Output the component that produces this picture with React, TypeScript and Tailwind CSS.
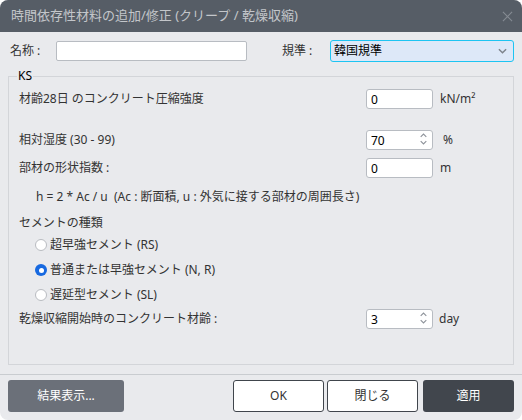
import React, { useState } from 'react';

// Small chevron used by the select box and the spin buttons
const Chevron: React.FC<{ dir: 'up' | 'down'; className?: string }> = ({ dir, className }) => (
  <svg viewBox="0 0 10 6" className={className} fill="none" stroke="currentColor" strokeWidth={1.6}>
    {dir === 'down' ? <path d="M1 1l4 4 4-4" /> : <path d="M1 5l4-4 4 4" />}
  </svg>
);

interface NumberFieldProps {
  value: string;
  spin?: boolean;
  onChange: (v: string) => void;
}

const NumberField: React.FC<NumberFieldProps> = ({ value, spin, onChange }) => (
  <div className="relative w-[67px] h-[20px] bg-white border border-[#b8bcc2] rounded-[3px] flex items-center">
    <input
      value={value}
      onChange={(e) => onChange(e.target.value)}
      className="w-full h-full pl-[4px] pr-[16px] bg-transparent outline-none text-[12px] text-black"
    />
    {spin && (
      <div className="absolute right-[5px] top-[2px] flex flex-col gap-[2px] text-[#8e939a]">
        <Chevron dir="up" className="w-[7px] h-[5px]" />
        <Chevron dir="down" className="w-[7px] h-[5px]" />
      </div>
    )}
  </div>
);

const Radio: React.FC<{ checked: boolean; label: string; onClick: () => void }> = ({ checked, label, onClick }) => (
  <button type="button" onClick={onClick} className="flex items-center gap-[3px] h-[16px] text-[12px] text-[#333]">
    {checked ? (
      <span className="w-[12px] h-[12px] rounded-full bg-[#1769e0] flex items-center justify-center">
        <span className="w-[5px] h-[5px] rounded-full bg-white" />
      </span>
    ) : (
      <span className="w-[12px] h-[12px] rounded-full bg-white border border-[#b9bcc1]" />
    )}
    <span>{label}</span>
  </button>
);

const cementTypes = ['超早強セメント (RS)', '普通または早強セメント (N, R)', '遅延型セメント (SL)'];

const App: React.FC = () => {
  const [name, setName] = useState('');
  const [fck, setFck] = useState('0');
  const [humidity, setHumidity] = useState('70');
  const [shape, setShape] = useState('0');
  const [age, setAge] = useState('3');
  const [cement, setCement] = useState(1);

  return (
    <div
      className="w-[522px] h-[420px] bg-[#e9eaed] rounded-[8px] overflow-hidden flex flex-col text-[12px] text-[#333]"
      style={{ fontFamily: '"Noto Sans", "Noto Sans CJK JP", sans-serif' }}
    >
      {/* Title bar */}
      <div className="h-[32px] shrink-0 bg-[#565d66] flex items-center justify-between pl-[11px] pr-[9px]">
        <span className="text-[13px] text-[#c3c6ca]">時間依存性材料の追加/修正 (クリープ / 乾燥収縮)</span>
        <svg viewBox="0 0 12 12" className="w-[11px] h-[11px] text-[#858b93]" stroke="currentColor" strokeWidth={1.2}>
          <path d="M1 1l10 10M11 1L1 11" />
        </svg>
      </div>

      {/* Name / standard */}
      <div className="flex items-center h-[22px] mt-[8px] pl-[10px]">
        <span className="w-[46px]">名称 :</span>
        <input
          value={name}
          onChange={(e) => setName(e.target.value)}
          className="w-[191px] h-[20px] bg-white border border-[#b8bcc2] rounded-[2px] outline-none px-[4px]"
        />
        <span className="ml-[35px] w-[48px]">規準 :</span>
        <div className="w-[184px] h-[22px] bg-[#dde8f8] border border-[#1dc4f2] rounded-[3px] flex items-center justify-between pl-[3px] pr-[6px] text-black">
          <span>韓国規準</span>
          <Chevron dir="down" className="w-[9px] h-[6px] text-[#7d838b]" />
        </div>
      </div>

      {/* KS parameters */}
      <fieldset className="mx-[8px] mt-[7px] h-[296px] border border-[#d3d5d9] pl-[10px] pr-[10px]">
        <legend className="ml-[-2px] px-[1px] text-[12px] text-black leading-[14px]">KS</legend>

        <div className="flex items-center h-[20px] mt-[6px]">
          <span className="w-[347px]">材齢28日 のコンクリート圧縮強度</span>
          <NumberField value={fck} onChange={setFck} />
          <span className="ml-[7px]">kN/m²</span>
        </div>

        <div className="flex items-center h-[20px] mt-[21px]">
          <span className="w-[347px]">相対湿度 (30 - 99)</span>
          <NumberField value={humidity} spin onChange={setHumidity} />
          <span className="ml-[10px]">%</span>
        </div>

        <div className="flex items-center h-[20px] mt-[8px]">
          <span className="w-[347px]">部材の形状指数 :</span>
          <NumberField value={shape} onChange={setShape} />
          <span className="ml-[7px]">m</span>
        </div>

        <div className="pl-[17px] mt-[9px] h-[20px] leading-[20px]">
          h = 2 * Ac / u&nbsp;&nbsp;(Ac : 断面積, u : 外気に接する部材の周囲長さ)
        </div>

        <div className="mt-[8px] h-[16px] leading-[16px]">セメントの種類</div>
        <div className="pl-[16px] mt-[6px] flex flex-col gap-[9px]">
          {cementTypes.map((label, i) => (
            <Radio key={label} label={label} checked={cement === i} onClick={() => setCement(i)} />
          ))}
        </div>

        <div className="flex items-center h-[20px] mt-[6px]">
          <span className="w-[347px]">乾燥収縮開始時のコンクリート材齢 :</span>
          <NumberField value={age} spin onChange={setAge} />
          <span className="ml-[6px]">day</span>
        </div>
      </fieldset>

      {/* Footer */}
      <div className="mt-[9px] border-t border-[#c9ccd0] flex items-center pt-[5px] px-[8px] gap-[3px]">
        <button className="w-[116px] h-[32px] rounded-[3px] bg-[#6b7079] text-white">結果表示...</button>
        <div className="flex-1" />
        <button className="w-[91px] h-[32px] rounded-[3px] bg-white border border-[#40454c] text-[#333]">OK</button>
        <button className="w-[91px] h-[32px] rounded-[3px] bg-white border border-[#40454c] text-[#333]">閉じる</button>
        <button className="ml-[2px] w-[91px] h-[32px] rounded-[3px] bg-[#41464d] text-white">適用</button>
      </div>
    </div>
  );
};

export default App;
